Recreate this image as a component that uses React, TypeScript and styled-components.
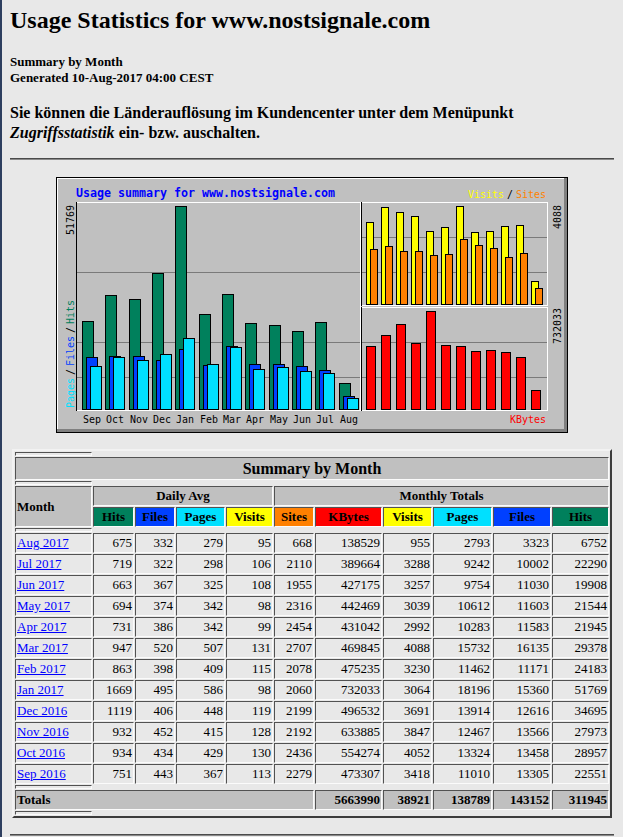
import React from 'react';
import styled, { createGlobalStyle, css } from 'styled-components';

const GlobalStyle = createGlobalStyle`
  html {
    background: #e8e8e8;
    overflow: hidden;
  }
  body {
    margin: 0;
    padding: 0 9px 0 8px;
    min-height: 100vh;
    box-sizing: border-box;
    border-left: 2px solid #2e3f5f;
    background: #e8e8e8;
    color: #000;
    font-family: "Liberation Serif", "Times New Roman", serif;
  }
`;

const HITS = '#00805c';
const FILES = '#0040ff';
const PAGES = '#00e0ff';
const VISITS = '#ffff00';
const SITES = '#ff8000';
const KBYTES = '#ff0000';
const MONO = '"DejaVu Sans Mono", "Liberation Mono", monospace';

type Row = { month: string; values: number[] };

const ROWS: Row[] = [
  { month: 'Aug 2017', values: [675, 332, 279, 95, 668, 138529, 955, 2793, 3323, 6752] },
  { month: 'Jul 2017', values: [719, 322, 298, 106, 2110, 389664, 3288, 9242, 10002, 22290] },
  { month: 'Jun 2017', values: [663, 367, 325, 108, 1955, 427175, 3257, 9754, 11030, 19908] },
  { month: 'May 2017', values: [694, 374, 342, 98, 2316, 442469, 3039, 10612, 11603, 21544] },
  { month: 'Apr 2017', values: [731, 386, 342, 99, 2454, 431042, 2992, 10283, 11583, 21945] },
  { month: 'Mar 2017', values: [947, 520, 507, 131, 2707, 469845, 4088, 15732, 16135, 29378] },
  { month: 'Feb 2017', values: [863, 398, 409, 115, 2078, 475235, 3230, 11462, 11171, 24183] },
  { month: 'Jan 2017', values: [1669, 495, 586, 98, 2060, 732033, 3064, 18196, 15360, 51769] },
  { month: 'Dec 2016', values: [1119, 406, 448, 119, 2199, 496532, 3691, 13914, 12616, 34695] },
  { month: 'Nov 2016', values: [932, 452, 415, 128, 2192, 633885, 3847, 12467, 13566, 27973] },
  { month: 'Oct 2016', values: [934, 434, 429, 130, 2436, 554274, 4052, 13324, 13458, 28957] },
  { month: 'Sep 2016', values: [751, 443, 367, 113, 2279, 473307, 3418, 11010, 13305, 22551] },
];

const TOTALS = [5663990, 38921, 138789, 143152, 311945];

const HEADS = [
  { label: 'Hits', color: HITS },
  { label: 'Files', color: FILES },
  { label: 'Pages', color: PAGES },
  { label: 'Visits', color: VISITS },
  { label: 'Sites', color: SITES },
  { label: 'KBytes', color: KBYTES },
  { label: 'Visits', color: VISITS },
  { label: 'Pages', color: PAGES },
  { label: 'Files', color: FILES },
  { label: 'Hits', color: HITS },
];

const COLS = [77, 41, 40, 49, 47, 40, 67, 49, 59, 58, 57];

/* ---------- page text ---------- */

const Title = styled.h2`
  margin: 6px 0 20px;
  font-size: 24px;
  line-height: 28px;
  font-weight: bold;
`;

const Meta = styled.div`
  font-size: 13px;
  line-height: 16px;
  font-weight: bold;
`;

const Notice = styled.h3`
  margin: 17px 0 0;
  font-size: 16px;
  line-height: 20px;
  font-weight: bold;
`;

const Rule = styled.hr<{ $top: number; $bottom: number }>`
  margin: ${(p) => p.$top}px 0 ${(p) => p.$bottom}px;
  height: 0;
  border: 0;
  border-top: 1px solid #4a4a4a;
  border-bottom: 1px solid #8a8a8a;
`;

const ChartFrame = styled.div`
  display: flex;
  justify-content: center;
  svg {
    display: block;
  }
`;

/* ---------- table ---------- */

const TableFrame = styled.div`
  display: flex;
  justify-content: center;
  margin-top: 16px;
`;

const StatsTable = styled.table`
  width: 600px;
  box-sizing: border-box;
  table-layout: fixed;
  border-collapse: separate;
  border-spacing: 1px;
  border-width: 2px;
  border-style: solid;
  border-color: #f2f2f2 #3c3c3c #3c3c3c #f2f2f2;
  font-family: "Liberation Serif", "Times New Roman", serif;
`;

const Col = styled.col<{ $w: number }>`
  width: ${(p) => p.$w}px;
`;

const bevel = css`
  box-sizing: border-box;
  border-width: 1px;
  border-style: solid;
  border-color: #525252 #fbfbfb #fbfbfb #525252;
  padding: 1px;
  vertical-align: middle;
`;

const SpacerCell = styled.th`
  ${bevel};
`;

const TitleCell = styled.th`
  ${bevel};
  background: #c0c0c0;
  font-size: 16px;
  line-height: 19px;
  font-weight: bold;
  text-align: center;
`;

const HeadCell = styled.th<{ $bg?: string; $align?: 'left' | 'center' }>`
  ${bevel};
  background: ${(p) => p.$bg ?? '#c0c0c0'};
  font-size: 13px;
  line-height: 16px;
  font-weight: bold;
  text-align: ${(p) => p.$align ?? 'center'};
  white-space: nowrap;
`;

const MonthCell = styled.td`
  ${bevel};
  font-size: 13px;
  line-height: 16px;
  text-align: left;
  white-space: nowrap;
`;

const MonthLink = styled.a`
  color: #0000ff;
  text-decoration: underline;
`;

const NumCell = styled.td`
  ${bevel};
  font-size: 13px;
  line-height: 16px;
  text-align: right;
`;

const TotalCell = styled.th<{ $align: 'left' | 'right' }>`
  ${bevel};
  background: #c0c0c0;
  font-size: 13px;
  line-height: 16px;
  font-weight: bold;
  text-align: ${(p) => p.$align};
`;

/* ---------- chart ---------- */

const series = [...ROWS].reverse().map((r) => ({
  hits: r.values[9],
  files: r.values[8],
  pages: r.values[7],
  visits: r.values[6],
  kbytes: r.values[5],
  sites: r.values[4],
}));

const MONTHS = ['Sep', 'Oct', 'Nov', 'Dec', 'Jan', 'Feb', 'Mar', 'Apr', 'May', 'Jun', 'Jul', 'Aug'];

const maxHits = Math.max(...series.map((s) => s.hits));
const maxVisits = Math.max(...series.map((s) => s.visits));
const maxK = Math.max(...series.map((s) => s.kbytes));

function Bar({ x, top, bottom, w, fill }: { x: number; top: number; bottom: number; w: number; fill: string }) {
  return (
    <rect
      x={x + 0.5}
      y={top + 0.5}
      width={w}
      height={Math.max(bottom - top, 1)}
      fill={fill}
      stroke="#000"
      strokeWidth={1}
    />
  );
}

function HLine({ y, x1, x2, color }: { y: number; x1: number; x2: number; color: string }) {
  return <line x1={x1} y1={y + 0.5} x2={x2} y2={y + 0.5} stroke={color} strokeWidth={1} />;
}

function VLine({ x, y1, y2, color }: { x: number; y1: number; y2: number; color: string }) {
  return <line x1={x + 0.5} y1={y1} x2={x + 0.5} y2={y2} stroke={color} strokeWidth={1} />;
}

function Label({
  x,
  y,
  len,
  color = '#000',
  up = false,
  bold = false,
  size = 11,
  adv = 6,
  children,
}: {
  x: number;
  y: number;
  len: number;
  color?: string;
  up?: boolean;
  bold?: boolean;
  size?: number;
  adv?: number;
  children: string;
}) {
  return (
    <text
      x={up ? 0 : x}
      y={up ? 0 : y}
      transform={up ? `translate(${x} ${y}) rotate(-90)` : undefined}
      fill={color}
      fontFamily={MONO}
      fontSize={size}
      fontWeight={bold ? 'bold' : 'normal'}
      textLength={len * adv}
      lengthAdjust="spacingAndGlyphs"
    >
      {children}
    </text>
  );
}

function UsageChart() {
  const mainTop = (v: number) => Math.round(232 - (v / maxHits) * 203);
  const visTop = (v: number) => Math.round(127 - (v / maxVisits) * 98);
  const kTop = (v: number) => Math.round(232 - (v / maxK) * 98);
  const grid = '#7a7a7a';

  return (
    <svg width={512} height={256} viewBox="0 0 512 256" shapeRendering="crispEdges">
      <rect x={0} y={0} width={512} height={256} fill="#c0c0c0" />
      <rect x={1} y={252} width={510} height={3} fill="#808080" />
      <rect x={508} y={1} width={3} height={254} fill="#808080" />
      <HLine y={1} x1={1} x2={508} color="#fff" />
      <VLine x={1} y1={1} y2={252} color="#fff" />
      <rect x={0.5} y={0.5} width={511} height={255} fill="none" stroke="#000" />

      {/* grid */}
      {[95, 165, 200].map((y) => (
        <HLine key={`m${y}`} y={y} x1={21} x2={304} color={grid} />
      ))}
      {[60, 95, 165, 200].map((y) => (
        <HLine key={`s${y}`} y={y} x1={306} x2={491} color={grid} />
      ))}

      {/* hits / files / pages */}
      {series.map((s, i) => {
        const x = Math.round(26 + i * 23.33);
        return (
          <g key={`b${i}`}>
            <Bar x={x} top={mainTop(s.hits)} bottom={232} w={11} fill={HITS} />
            <Bar x={x + 4} top={mainTop(s.files)} bottom={232} w={11} fill={FILES} />
            <Bar x={x + 8} top={mainTop(s.pages)} bottom={232} w={11} fill={PAGES} />
          </g>
        );
      })}

      {/* visits / sites */}
      {series.map((s, i) => {
        const x = 310 + i * 15;
        return (
          <g key={`v${i}`}>
            <Bar x={x} top={visTop(s.visits)} bottom={127} w={7} fill={VISITS} />
            <Bar x={x + 4} top={visTop(s.sites)} bottom={127} w={7} fill={SITES} />
          </g>
        );
      })}

      {/* kbytes */}
      {series.map((s, i) => (
        <Bar key={`k${i}`} x={310 + i * 15} top={kTop(s.kbytes)} bottom={232} w={9} fill={KBYTES} />
      ))}

      {/* panel edges */}
      <VLine x={20} y1={25} y2={234} color="#000" />
      <HLine y={25} x1={21} x2={305} color="#fff" />
      <VLine x={304} y1={26} y2={234} color="#fff" />
      <HLine y={233} x1={21} x2={305} color="#fff" />

      <VLine x={305} y1={25} y2={129} color="#000" />
      <HLine y={25} x1={306} x2={492} color="#fff" />
      <VLine x={491} y1={25} y2={129} color="#fff" />
      <HLine y={128} x1={306} x2={492} color="#fff" />

      <VLine x={305} y1={130} y2={234} color="#000" />
      <HLine y={130} x1={306} x2={492} color="#fff" />
      <VLine x={491} y1={130} y2={234} color="#fff" />
      <HLine y={233} x1={306} x2={492} color="#fff" />

      {/* texts */}
      <Label x={20} y={19.5} len={37} adv={7} size={12} bold color="#0000ff">
        Usage summary for www.nostsignale.com
      </Label>

      {MONTHS.map((m, i) => (
        <Label key={m} x={Math.round(26 + i * 23.33) + 1} y={246} len={3}>
          {m}
        </Label>
      ))}

      <Label x={17.5} y={58} len={5} up>
        51769
      </Label>
      <Label x={17.5} y={231} len={5} up color={PAGES}>
        Pages
      </Label>
      <Label x={17.5} y={198} len={1} up>
        /
      </Label>
      <Label x={17.5} y={189} len={5} up color={FILES}>
        Files
      </Label>
      <Label x={17.5} y={156} len={1} up>
        /
      </Label>
      <Label x={17.5} y={147} len={4} up color={HITS}>
        Hits
      </Label>

      <Label x={412} y={20.5} len={6} color={VISITS}>
        Visits
      </Label>
      <Label x={451} y={20.5} len={1}>
        /
      </Label>
      <Label x={460} y={20.5} len={5} color={SITES}>
        Sites
      </Label>

      <Label x={504.5} y={52} len={4} up>
        4088
      </Label>
      <Label x={504.5} y={167} len={6} up>
        732033
      </Label>

      <Label x={454} y={246} len={6} color={KBYTES}>
        KBytes
      </Label>
    </svg>
  );
}

export default function App() {
  return (
    <>
      <GlobalStyle />
      <Title>Usage Statistics for www.nostsignale.com</Title>
      <Meta>
        Summary by Month
        <br />
        Generated 10-Aug-2017 04:00 CEST
      </Meta>
      <Notice>
        Sie können die Länderauflösung im Kundencenter unter dem Menüpunkt
        <br />
        <i>Zugriffsstatistik</i> ein- bzw. auschalten.
      </Notice>
      <Rule $top={15} $bottom={17} />

      <ChartFrame>
        <UsageChart />
      </ChartFrame>

      <TableFrame>
        <StatsTable>
          <colgroup>
            {COLS.map((w, i) => (
              <Col key={i} $w={w} />
            ))}
          </colgroup>
          <tbody>
            <tr>
              <SpacerCell />
            </tr>
            <tr>
              <TitleCell colSpan={11}>Summary by Month</TitleCell>
            </tr>
            <tr>
              <SpacerCell />
            </tr>
            <tr>
              <HeadCell rowSpan={2} $align="left">
                Month
              </HeadCell>
              <HeadCell colSpan={4}>Daily Avg</HeadCell>
              <HeadCell colSpan={6}>Monthly Totals</HeadCell>
            </tr>
            <tr>
              {HEADS.map((h, i) => (
                <HeadCell key={i} $bg={h.color}>
                  {h.label}
                </HeadCell>
              ))}
            </tr>
            <tr>
              <SpacerCell />
            </tr>
            {ROWS.map((r) => (
              <tr key={r.month}>
                <MonthCell>
                  <MonthLink href="#">{r.month}</MonthLink>
                </MonthCell>
                {r.values.map((v, i) => (
                  <NumCell key={i}>{v}</NumCell>
                ))}
              </tr>
            ))}
            <tr>
              <SpacerCell />
            </tr>
            <tr>
              <TotalCell colSpan={6} $align="left">
                Totals
              </TotalCell>
              {TOTALS.map((t, i) => (
                <TotalCell key={i} $align="right">
                  {t}
                </TotalCell>
              ))}
            </tr>
            <tr>
              <SpacerCell />
            </tr>
          </tbody>
        </StatsTable>
      </TableFrame>

      <Rule $top={16} $bottom={0} />
    </>
  );
}
